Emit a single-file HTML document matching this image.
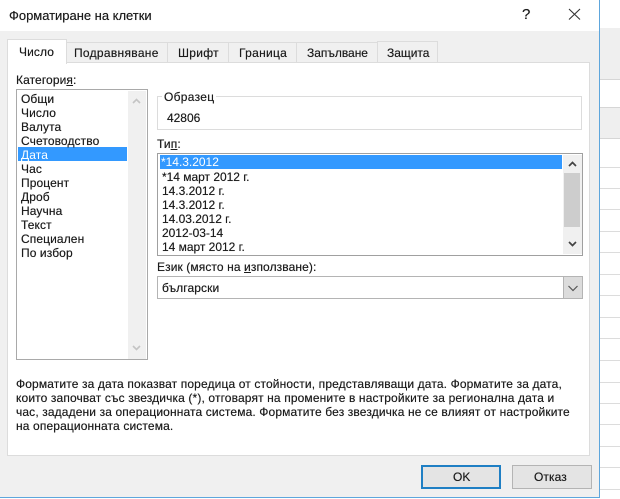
<!DOCTYPE html>
<html lang="bg">
<head>
<meta charset="utf-8">
<title>Форматиране на клетки</title>
<style>
html,body{margin:0;padding:0;background:#fff}
#root{position:relative;width:620px;height:499px;overflow:hidden;background:#fff;font-family:"Liberation Sans","DejaVu Sans",sans-serif;font-size:12px;color:#1c1c1c}
.b{position:absolute;box-sizing:border-box}
.t{position:absolute;white-space:nowrap;line-height:14px;letter-spacing:.1px;filter:blur(.3px);text-shadow:0 0 .4px #333}
.n{letter-spacing:-.02px}
.w{letter-spacing:.3px}
u{text-underline-offset:1px}
svg{position:absolute;overflow:visible}
</style>
</head>
<body>
<div id="root">
<!-- background sheet at right -->
<div class="b" style="left:600px;top:28px;width:20px;height:52px;background:#efefef;border-bottom:1px solid #d6d6d6"></div>
<div class="b" style="left:600px;top:107px;width:20px;height:32px;background:#efefef;border-top:1px solid #d6d6d6;border-bottom:1px solid #d6d6d6"></div>
<div class="b" style="left:600px;top:167px;width:20px;height:1px;background:#dcdcdc"></div>
<div class="b" style="left:600px;top:188px;width:20px;height:1px;background:#dcdcdc"></div>
<div class="b" style="left:600px;top:209px;width:20px;height:1px;background:#dcdcdc"></div>
<div class="b" style="left:600px;top:231px;width:20px;height:1px;background:#dcdcdc"></div>
<div class="b" style="left:600px;top:252px;width:20px;height:1px;background:#dcdcdc"></div>
<div class="b" style="left:600px;top:274px;width:20px;height:1px;background:#dcdcdc"></div>
<div class="b" style="left:600px;top:295px;width:20px;height:1px;background:#dcdcdc"></div>
<div class="b" style="left:600px;top:317px;width:20px;height:1px;background:#dcdcdc"></div>
<div class="b" style="left:600px;top:338px;width:20px;height:1px;background:#dcdcdc"></div>
<div class="b" style="left:600px;top:360px;width:20px;height:1px;background:#dcdcdc"></div>
<div class="b" style="left:600px;top:382px;width:20px;height:1px;background:#dcdcdc"></div>
<div class="b" style="left:600px;top:403px;width:20px;height:1px;background:#dcdcdc"></div>
<div class="b" style="left:600px;top:424px;width:20px;height:1px;background:#dcdcdc"></div>
<div class="b" style="left:600px;top:446px;width:20px;height:1px;background:#dcdcdc"></div>
<div class="b" style="left:600px;top:467px;width:20px;height:1px;background:#dcdcdc"></div>
<div class="b" style="left:600px;top:489px;width:20px;height:1px;background:#dcdcdc"></div>

<!-- dialog -->
<div class="b" style="left:0;top:0;width:600px;height:31px;background:#fff"></div>
<div class="b" style="left:0;top:31px;width:600px;height:466px;background:#f0f0f0"></div>
<div class="b" style="left:599px;top:0;width:1px;height:498px;background:#5ea6dc"></div>
<div class="b" style="left:0;top:497px;width:600px;height:1px;background:#5ea6dc"></div>

<div class="t n" style="left:9px;top:8px;font-size:13px;line-height:15px">Форматиране на клетки</div>
<div class="t" style="left:522px;top:6px;font-size:15px;line-height:17px;letter-spacing:0">?</div>
<svg style="left:0;top:0" width="620" height="40"><path d="M569 9L580 19.500M580 9L569 19.500" stroke="#333" stroke-width="1.100" fill="none"/></svg>

<!-- tabs -->
<div class="b" style="left:66px;top:42px;width:102px;height:21px;background:#f0f0f0;border:1px solid #dcdcdc"></div>
<div class="b" style="left:167px;top:42px;width:62px;height:21px;background:#f0f0f0;border:1px solid #dcdcdc"></div>
<div class="b" style="left:228px;top:42px;width:69px;height:21px;background:#f0f0f0;border:1px solid #dcdcdc"></div>
<div class="b" style="left:296px;top:42px;width:82px;height:21px;background:#f0f0f0;border:1px solid #dcdcdc"></div>
<div class="b" style="left:377px;top:41px;width:61px;height:22px;background:#f0f0f0;border:1px solid #dcdcdc"></div>
<!-- panel -->
<div class="b" style="left:7px;top:62px;width:583px;height:394px;background:#fff;border:1px solid #dcdcdc"></div>
<div class="b" style="left:7px;top:39px;width:60px;height:25px;background:#fff;border:1px solid #dcdcdc;border-bottom:0"></div>
<div class="t" style="left:19px;top:45px">Число</div>
<div class="t w" style="left:74px;top:46px">Подравняване</div>
<div class="t w" style="left:178px;top:46px">Шрифт</div>
<div class="t w" style="left:239px;top:46px">Граница</div>
<div class="t n" style="left:307px;top:46px">Запълване</div>
<div class="t n" style="left:387px;top:46px">Защита</div>

<!-- category -->
<div class="t" style="left:16px;top:73px">Категори<u>я</u>:</div>
<div class="b" style="left:16px;top:89px;width:132px;height:271px;background:#fff;border:1.500px solid #a9a9a9"></div>
<div class="b" style="left:128px;top:91px;width:18px;height:268px;background:#f0f0f0"></div>
<svg style="left:0;top:0" width="200" height="370"><path d="M133 103L136.500 99.500L140 103M133 346L136.500 349.500L140 346" stroke="#c4c4c4" stroke-width="1.600" fill="none"/></svg>
<div class="b" style="left:18px;top:147px;width:109px;height:14px;background:#3399ff"></div>
<div class="t" style="left:21px;top:92px">Общи</div>
<div class="t" style="left:21px;top:106px">Число</div>
<div class="t" style="left:21px;top:120px">Валута</div>
<div class="t" style="left:21px;top:134px">Счетоводство</div>
<div class="t" style="left:21px;top:148px;color:#fff;text-shadow:none">Дата</div>
<div class="t" style="left:21px;top:162px">Час</div>
<div class="t" style="left:21px;top:176px">Процент</div>
<div class="t" style="left:21px;top:190px">Дроб</div>
<div class="t" style="left:21px;top:204px">Научна</div>
<div class="t" style="left:21px;top:218px">Текст</div>
<div class="t" style="left:21px;top:232px">Специален</div>
<div class="t" style="left:21px;top:246px">По избор</div>

<!-- sample -->
<div class="b" style="left:157px;top:96px;width:425px;height:34px;border:1px solid #dcdcdc"></div>
<div class="t w" style="left:162px;top:90px;background:#fff;padding:0 2px">Образец</div>
<div class="t n" style="left:167px;top:111px">42806</div>

<!-- type -->
<div class="t" style="left:157px;top:137px">Ти<u>п</u>:</div>
<div class="b" style="left:157px;top:153px;width:426px;height:103px;background:#fff;border:1.500px solid #a0a0a0"></div>
<div class="b" style="left:160px;top:155px;width:402px;height:14px;background:#3399ff"></div>
<div class="b" style="left:563px;top:155px;width:18.500px;height:99px;background:#f0f0f0"></div>
<div class="b" style="left:564px;top:173px;width:16px;height:54px;background:#cdcdcd"></div>
<svg style="left:0;top:0" width="620" height="310"><path d="M569 166L572.500 162.500L576 166M569 242L572.500 245.500L576 242" stroke="#444" stroke-width="1.700" fill="none"/></svg>
<div class="t n" style="left:161px;top:155px;color:#fff;text-shadow:none">*14.3.2012</div>
<div class="t n" style="left:162px;top:170px">*14 март 2012 г.</div>
<div class="t n" style="left:162px;top:184px">14.3.2012 г.</div>
<div class="t n" style="left:162px;top:198px">14.3.2012 г.</div>
<div class="t n" style="left:162px;top:212px">14.03.2012 г.</div>
<div class="t n" style="left:162px;top:226px">2012-03-14</div>
<div class="t n" style="left:162px;top:240px">14 март 2012 г.</div>

<!-- language -->
<div class="t" style="left:157px;top:260px">Език (място на <u>и</u>зползване):</div>
<div class="b" style="left:157px;top:276px;width:426px;height:23px;background:#fff;border:1.500px solid #b4b4b4"></div>
<div class="b" style="left:563px;top:276px;width:20px;height:23px;background:#dcdcdc;border:1.500px solid #b4b4b4"></div>
<svg style="left:0;top:0" width="620" height="310"><path d="M568.500 286L573 290.500L577.500 286" stroke="#555" stroke-width="1.200" fill="none"/></svg>
<div class="t" style="left:162px;top:281px">български</div>

<!-- description -->
<div class="t" style="left:16px;top:377px;letter-spacing:.13px">Форматите за дата показват поредица от стойности, представляващи дата. Форматите за дата,</div>
<div class="t" style="left:16px;top:391px;letter-spacing:.13px">които започват със звездичка (*), отговарят на промените в настройките за регионална дата и</div>
<div class="t" style="left:16px;top:405px;letter-spacing:.13px">час, зададени за операционната система. Форматите без звездичка не се влияят от настройките</div>
<div class="t" style="left:16px;top:419px;letter-spacing:.13px">на операционната система.</div>

<!-- buttons -->
<div class="b" style="left:421px;top:465px;width:80px;height:24px;background:#e4e4e4;border:2px solid #1f7fc4"></div>
<div class="t n" style="left:453px;top:470px">OK</div>
<div class="b" style="left:512px;top:465px;width:80px;height:24px;background:#e4e4e4;border:1px solid #b4b4b4"></div>
<div class="t" style="left:534px;top:470px">Отказ</div>
</div>
</body>
</html>
